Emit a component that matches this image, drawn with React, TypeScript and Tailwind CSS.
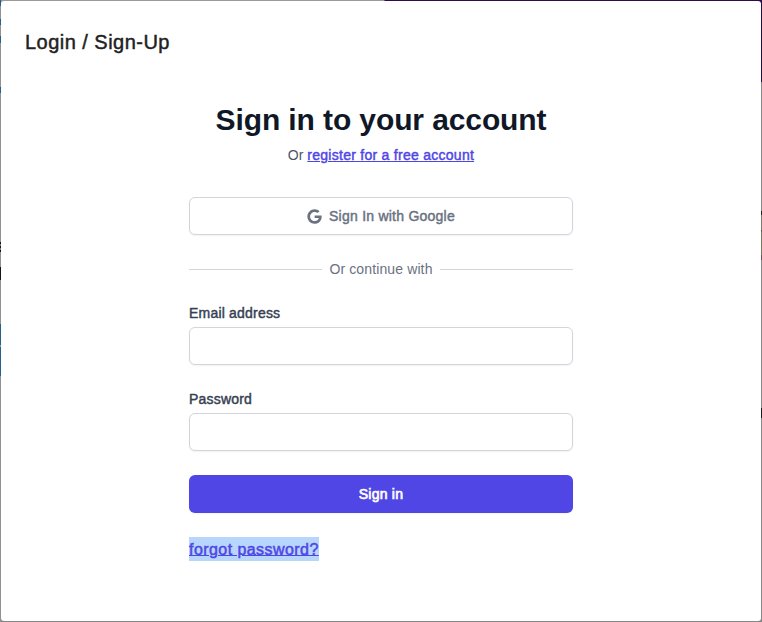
import { FaGoogle } from "react-icons/fa";

const medium = "[-webkit-text-stroke:0.45px_currentColor]";

function Field({ id, label, type }: { id: string; label: string; type: string }) {
  return (
    <div>
      <label htmlFor={id} className={`block text-sm tracking-[0.2px] text-gray-700 ${medium}`}>
        {label}
      </label>
      <input
        id={id}
        type={type}
        className="mt-1 block h-[38px] w-full rounded-md border border-gray-300 bg-white px-3 text-sm shadow-xs outline-none"
      />
    </div>
  );
}

function Edge({ side }: { side: "left" | "right" }) {
  return side === "left" ? (
    <div className="w-px shrink-0 bg-[linear-gradient(#25618f_0_6px,#929292_6px_19px,#25618f_19px_25px,#929292_25px_36px,#25618f_36px_43px,#929292_43px_87px,#25618f_87px_93px,#929292_93px_242px,#151515_242px_244px,#777_244px_246px,#151515_246px_248px,#777_248px_250px,#151515_250px_252px,#929292_252px_267px,#151515_267px_280px,#929292_280px_324px,#25618f_324px_345px,#8ba0b0_345px_347px,#25618f_347px_376px,#929292_376px)]" />
  ) : (
    <div className="w-px shrink-0 bg-[linear-gradient(#2a0b4a_0_82px,#888_82px_211px,#222_211px_215px,#85766e_215px_230px,#704c5b_230px_232px,#77785d_232px_255px,#704c5b_255px_260px,#888_260px_408px,#1b1b1b_408px_418px,#888_418px)]" />
  );
}

export default function App() {
  return (
    <div className="flex h-[622px] w-[762px] overflow-hidden bg-[linear-gradient(90deg,#999_384px,#2e0a4f_385px)] font-['Liberation_Sans',Arial,sans-serif]">
      <Edge side="left" />
      <div className="flex min-w-0 flex-1 flex-col bg-[linear-gradient(transparent_50%,#858585_50%)] py-px">
        <main className="flex-1 rounded-[3px] bg-white px-6 pt-[27px]">
          <h1 className={`text-xl tracking-[0.47px] text-[#212121] ${medium}`}>Login / Sign-Up</h1>
          <div className="mx-auto mt-[46px] w-96">
            <h2 className="text-center text-3xl font-bold tracking-[-0.11px] whitespace-nowrap text-gray-900">
              Sign in to your account
            </h2>
            <p className="mt-[7px] text-center text-sm text-gray-600">
              Or{" "}
              <a className={`tracking-[0.27px] text-[#4f46e5] underline ${medium}`}>register for a free account</a>
            </p>
            <button className="mt-8 flex h-[38px] w-full items-center justify-center rounded-md border border-gray-300 bg-white text-sm text-gray-500 shadow-xs">
              <FaGoogle className="mr-[7px] size-[15px]" />
              <span className={`tracking-[0.24px] ${medium}`}>Sign In with Google</span>
            </button>
            <div className="mt-6 flex items-center text-sm text-gray-500">
              <div className="h-px flex-1 bg-gray-300" />
              <span className="w-[118px] text-center tracking-[0.12px]">Or continue with</span>
              <div className="h-px flex-1 bg-gray-300" />
            </div>
            <form className="mt-6 space-y-6">
              <Field id="email" label="Email address" type="email" />
              <Field id="password" label="Password" type="password" />
              <button
                type="button"
                className="flex h-[38px] w-full items-center justify-center rounded-md bg-[#4f46e5] text-sm tracking-[0.22px] text-white shadow-xs [-webkit-text-stroke:0.65px_currentColor]"
              >
                Sign in
              </button>
              <div className="flex">
                <a className="bg-[#b8d6fb] text-base tracking-[0.44px] text-[#4f46e5] underline [-webkit-text-stroke:0.5px_currentColor]">
                  <span className="relative top-px">forgot password?</span>
                </a>
              </div>
            </form>
          </div>
        </main>
      </div>
      <Edge side="right" />
    </div>
  );
}
